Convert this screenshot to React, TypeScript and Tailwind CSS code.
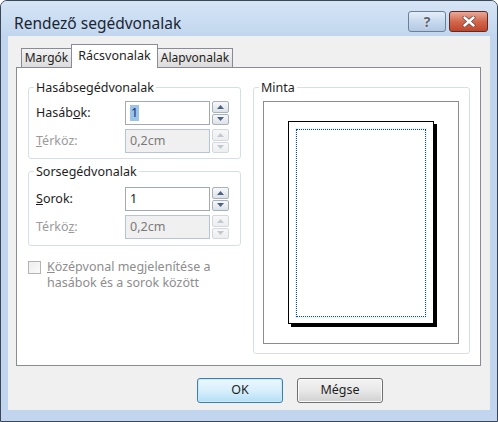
import React from "react";

const Arrow = ({ up, disabled }: { up?: boolean; disabled?: boolean }) => (
    <svg width="7" height="4" viewBox="0 0 7 4">
        <path d={up ? "M0 4 L3.5 0 L7 4Z" : "M0 0 L3.5 4 L7 0Z"} fill={disabled ? "#c3c8cf" : "#4d6185"} />
    </svg>
);

const Spinner = ({ disabled }: { disabled?: boolean }) => {
    const btn = disabled
        ? "flex-1 flex items-center justify-center rounded-[2px] border border-[#d3d8de] bg-linear-to-b from-[#f7f7f7] to-[#eceef0]"
        : "flex-1 flex items-center justify-center rounded-[2px] border border-[#a8b2bf] bg-linear-to-b from-[#f8f8f8] to-[#dde2e8]";
    return (
        <div className="ml-[2px] w-[17px] h-[24px] flex flex-col gap-[1px]">
            <div className={btn}><Arrow up disabled={disabled} /></div>
            <div className={btn}><Arrow disabled={disabled} /></div>
        </div>
    );
};

const Row = ({ label, value, disabled, selected }: { label: React.ReactNode; value: string; disabled?: boolean; selected?: boolean }) => (
    <div className="flex items-center h-[24px]">
        <div className={`w-[96px] pl-[7px] ${disabled ? "text-[#9a9a9a]" : "text-[#1e1e1e]"}`}>{label}</div>
        <div
            className={`w-[85px] h-[24px] flex items-center pl-[4px] border ${
                disabled ? "border-[#b5c4d6] bg-[#f0f0f0] text-[#7a7a7a]" : "border-[#a3a9b2] bg-white text-[#1e1e1e]"
            }`}
        >
            {selected ? <span className="bg-[#9cc3ea] text-[#10306a] px-px leading-[16px]">{value}</span> : value}
        </div>
        <Spinner disabled={disabled} />
    </div>
);

const Group = ({ title, children, className }: { title: string; children: React.ReactNode; className?: string }) => (
    <fieldset className={`border border-[#d5dfe5] rounded-[3px] ${className ?? ""}`}>
        <legend className="ml-[5px] px-[2px] text-[12.5px] leading-[15px] text-[#1e1e1e]">{title}</legend>
        {children}
    </fieldset>
);

export default function App() {
    return (
        <div className="w-[498px] h-[422px] bg-white font-['Noto_Sans','Open_Sans',sans-serif] text-[12px]">
            <div className="w-[498px] h-[422px] flex flex-col border border-[#3b4756] rounded-t-[7px] bg-[#c1d6ee] overflow-hidden">
                {/* title bar */}
                <div className="h-[35px] flex items-start justify-between bg-linear-to-b from-[#d6e5f6] to-[#c1d6ee]">
                    <div className="pl-[13px] pt-[13px] text-[15.5px] leading-[18px] text-[#1b2633]">Rendező segédvonalak</div>
                    <div className="flex gap-[3px] pt-[10px] pr-[9px]">
                        <div className="w-[38px] h-[21px] rounded-[3px] border border-[#6e7f95] bg-linear-to-b from-[#e4eef9] via-[#c8d9ed] to-[#b3c9e3] flex items-center justify-center text-[14px] font-bold text-[#5d6571] [text-shadow:0_0_2px_#fff]">
                            ?
                        </div>
                        <div className="w-[39px] h-[21px] rounded-[3px] border border-[#5e2a22] bg-linear-to-b from-[#eaa998] via-[#d2674d] to-[#c0452a] flex items-center justify-center">
                            <svg width="14" height="11" viewBox="0 0 14 11">
                                <path d="M2.5 1.5 L11.5 9.5 M11.5 1.5 L2.5 9.5" stroke="#6b4a44" strokeWidth="4" strokeLinecap="round" />
                                <path d="M2.5 1.5 L11.5 9.5 M11.5 1.5 L2.5 9.5" stroke="#ffffff" strokeWidth="2.4" strokeLinecap="round" />
                            </svg>
                        </div>
                    </div>
                </div>

                {/* client area */}
                <div className="px-[7px]">
                    <div className="h-[374px] bg-[#f0f0f0] flex flex-col">
                        {/* tabs */}
                        <div className="mt-[8px] pl-[13px] h-[23px] flex items-end text-[12px]">
                            <div className="w-[51px] h-[19px] border border-b-0 border-[#898c95] bg-linear-to-b from-[#f3f3f3] to-[#dcdcdc] flex items-center justify-center text-[#1e1e1e]">
                                Margók
                            </div>
                            <div className="relative z-10 -ml-px -mb-px w-[87px] h-[24px] border border-b-0 border-[#898c95] bg-white flex items-start justify-center pt-[2px] text-[12.5px] text-[#1e1e1e]">
                                Rácsvonalak
                            </div>
                            <div className="-ml-px w-[76px] h-[19px] border border-b-0 border-[#898c95] bg-linear-to-b from-[#f3f3f3] to-[#dcdcdc] flex items-center justify-center text-[#1e1e1e]">
                                Alapvonalak
                            </div>
                        </div>

                        {/* tab panel */}
                        <div className="ml-[8px] w-[465px] h-[299px] border border-[#898c95] bg-white flex gap-[12px] pl-[11px] text-[12.5px]">
                            <div className="w-[213px] flex flex-col">
                                <Group title="Hasábsegédvonalak" className="mt-[12px] pt-[6px] pb-[5px] flex flex-col gap-[4px]">
                                    <Row label={<>Hasáb<span className="underline">o</span>k:</>} value="1" selected />
                                    <Row label={<><span className="underline">T</span>érköz:</>} value="0,2cm" disabled />
                                </Group>
                                <Group title="Sorsegédvonalak" className="mt-[5px] pt-[8px] pb-[6px] flex flex-col gap-[4px]">
                                    <Row label={<><span className="underline">S</span>orok:</>} value="1" />
                                    <Row label={<>Térkö<span className="underline">z</span>:</>} value="0,2cm" disabled />
                                </Group>
                                <div className="mt-[14px] flex items-start gap-[6px]">
                                    <div className="w-[13px] h-[13px] mt-px border border-[#b3b3b3] bg-linear-to-br from-[#eeeeee] to-[#fafafa]" />
                                    <div className="leading-[16px] text-[#8d8d8d] -mt-[1px]">
                                        <span className="underline">K</span>özépvonal megjelenítése a<br />hasábok és a sorok között
                                    </div>
                                </div>
                            </div>

                            <Group title="Minta" className="mt-[12px] w-[217px] h-[274px]">
                                <div className="mt-[6px] ml-[9px] w-[196px] h-[243px] border border-[#8c8c8c] bg-white flex items-center justify-center">
                                    <div className="w-[146px] h-[203px] border border-black bg-white shadow-[3px_3px_0_#000] p-[7px] pb-[6px]">
                                        <div className="w-full h-full border border-dotted border-[#0a3cc8] shadow-[0_0_0_1px_#e6fbff]" />
                                    </div>
                                </div>
                            </Group>
                        </div>

                        {/* buttons */}
                        <div className="mt-[12px] pl-[189px] flex gap-[14px] text-[12.5px]">
                            <div className="w-[86px] h-[25px] rounded-[3px] border border-[#3c7fb1] bg-linear-to-b from-[#ebf7fd] via-[#d8effc] to-[#b3dff6] shadow-[inset_0_0_0_1px_#c8e9fa] flex items-center justify-center text-[#1e1e1e]">
                                OK
                            </div>
                            <div className="w-[86px] h-[25px] rounded-[3px] border border-[#707070] bg-linear-to-b from-[#f3f3f3] via-[#e8e8e8] to-[#d0d0d0] shadow-[inset_0_0_0_1px_#fbfbfb] flex items-center justify-center text-[#1e1e1e]">
                                Mégse
                            </div>
                        </div>
                    </div>
                </div>
            </div>
        </div>
    );
}
